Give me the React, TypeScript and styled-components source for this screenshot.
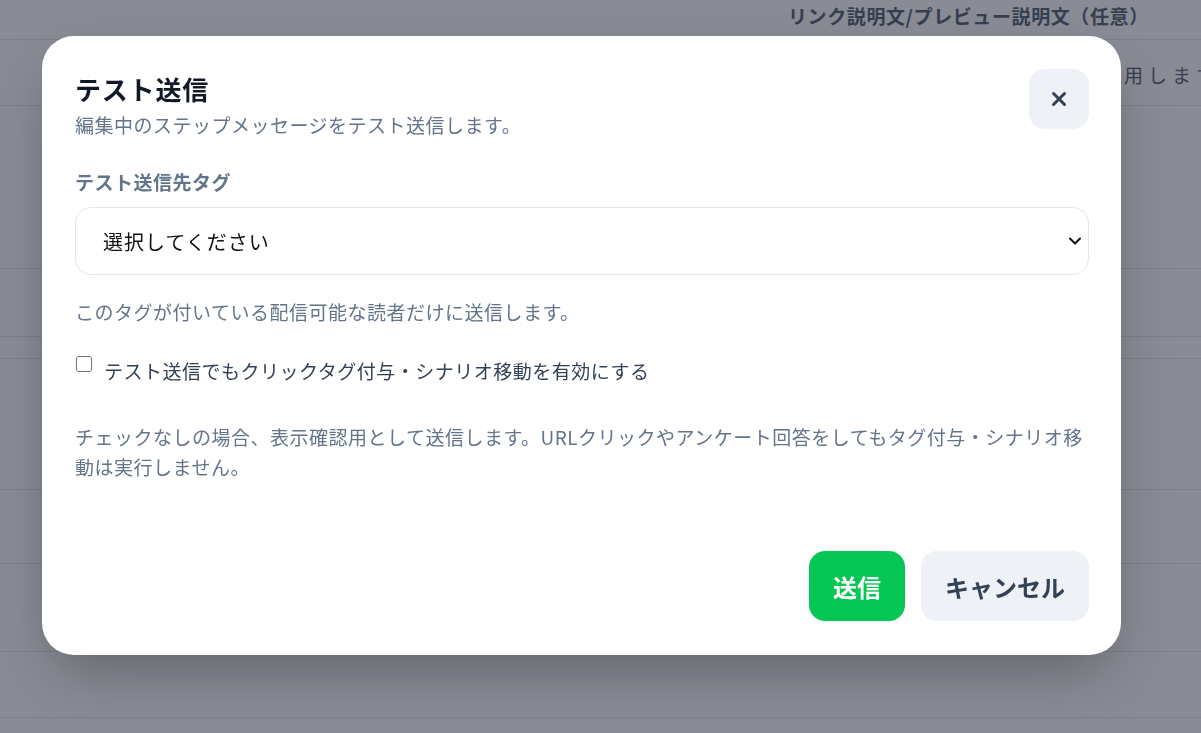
import styled, { createGlobalStyle } from 'styled-components'

const GlobalStyle = createGlobalStyle`
  html, body {
    margin: 0;
    padding: 0;
    background: #ffffff;
    font-family: 'Noto Sans CJK JP', 'Noto Sans', sans-serif;
  }
  * {
    box-sizing: border-box;
  }
`

const Page = styled.div`
  width: 1201px;
  height: 733px;
  overflow: hidden;
  background: #ffffff;
`

const Row = styled.div<{ $h: number }>`
  height: ${(p) => p.$h}px;
  border-bottom: 1px solid #e2e5ea;
  display: flex;
  align-items: center;
  padding-left: 788px;
  white-space: nowrap;
  overflow: hidden;
`

const HeadCell = styled.span`
  margin-bottom: 8px;
  font-size: 19px;
  letter-spacing: 0.6px;
  font-weight: 700;
  color: #5a6475;
`

const BodyCell = styled.span`
  margin-top: 4px;
  font-size: 19px;
  letter-spacing: 5px;
  color: #5a6475;
`

const Overlay = styled.div`
  position: fixed;
  inset: 0;
  background: rgba(20, 26, 44, 0.5);
  display: flex;
  align-items: flex-start;
  justify-content: flex-start;
  padding: 36px 0 0 42px;
`

const Modal = styled.div`
  width: 1079px;
  background: #ffffff;
  border-radius: 32px;
  padding: 33px 32px 34px 33px;
  box-shadow: 0 25px 60px -12px rgba(0, 0, 0, 0.3);
  display: flex;
  flex-direction: column;
`

const Header = styled.div`
  display: flex;
  justify-content: space-between;
  align-items: flex-start;
`

const Title = styled.h2`
  margin: 0;
  font-size: 26px;
  line-height: 40px;
  letter-spacing: 0.8px;
  font-weight: 700;
  color: #111827;
`

const Subtitle = styled.p`
  margin: 0;
  font-size: 19px;
  line-height: 32px;
  letter-spacing: 0.5px;
  color: #64748b;
`

const CloseButton = styled.button`
  width: 60px;
  height: 60px;
  border: none;
  border-radius: 16px;
  background: #eef1f5;
  color: #334155;
  display: flex;
  align-items: center;
  justify-content: center;
  padding: 0;
  cursor: pointer;
`

const Label = styled.label`
  margin-top: 27px;
  font-size: 19px;
  line-height: 28px;
  letter-spacing: 0.5px;
  font-weight: 700;
  color: #64748b;
`

const SelectWrap = styled.div`
  position: relative;
  margin-top: 11px;
`

const Select = styled.select`
  appearance: none;
  width: 100%;
  height: 68px;
  border: 1px solid #e3e6ea;
  border-radius: 16px;
  background: #ffffff;
  padding: 0 48px 0 27px;
  font-family: inherit;
  font-size: 20px;
  letter-spacing: 1px;
  color: #111111;
  outline: none;
`

const Chevron = styled.svg`
  position: absolute;
  right: 7px;
  top: 50%;
  transform: translateY(-50%);
  pointer-events: none;
`

const Help = styled.p<{ $top: number }>`
  margin: ${(p) => p.$top}px 0 0;
  font-size: 19px;
  line-height: ${(p) => (p.$top > 30 ? 30 : 28)}px;
  letter-spacing: 0.5px;
  color: #64748b;
`

const CheckRow = styled.label`
  margin-top: 30px;
  display: flex;
  align-items: flex-start;
  gap: 12px;
  font-size: 19px;
  line-height: 30px;
  letter-spacing: 0.5px;
  color: #334155;
`

const Checkbox = styled.input`
  width: 16px;
  height: 16px;
  margin: 0 0 0 1px;
  flex-shrink: 0;
`

const Footer = styled.div`
  margin-top: 69px;
  display: flex;
  justify-content: flex-end;
  gap: 16px;
`

const Button = styled.button<{ $primary?: boolean }>`
  height: 70px;
  padding: 0 24px;
  border: none;
  border-radius: 16px;
  font-family: inherit;
  font-size: 24px;
  font-weight: 700;
  background: ${(p) => (p.$primary ? '#06c755' : '#eef1f5')};
  color: ${(p) => (p.$primary ? '#ffffff' : '#334155')};
  cursor: pointer;
`

const rows = [40, 66, 163, 68, 22, 131, 74, 88, 66, 60]

export default function App() {
  return (
    <Page>
      <GlobalStyle />
      {rows.map((h, i) => (
        <Row key={i} $h={h}>
          {i === 0 && <HeadCell>リンク説明文/プレビュー説明文（任意）</HeadCell>}
          {i === 1 && <BodyCell>未入力の場合は本文の冒頭を使用します</BodyCell>}
        </Row>
      ))}

      <Overlay>
        <Modal>
          <Header>
            <div>
              <Title>テスト送信</Title>
              <Subtitle>編集中のステップメッセージをテスト送信します。</Subtitle>
            </div>
            <CloseButton aria-label="閉じる">
              <svg width="16" height="16" viewBox="0 0 16 16">
                <path
                  d="M2.5 2.5 L13.5 13.5 M13.5 2.5 L2.5 13.5"
                  stroke="currentColor"
                  strokeWidth="3"
                  strokeLinecap="round"
                />
              </svg>
            </CloseButton>
          </Header>

          <Label>テスト送信先タグ</Label>
          <SelectWrap>
            <Select defaultValue="">
              <option value="">選択してください</option>
            </Select>
            <Chevron width="14" height="14" viewBox="0 0 14 14">
              <path
                d="M2 4.5 L7 9.5 L12 4.5"
                fill="none"
                stroke="#111"
                strokeWidth="2"
                strokeLinecap="round"
                strokeLinejoin="round"
              />
            </Chevron>
          </SelectWrap>

          <Help $top={23}>このタグが付いている配信可能な読者だけに送信します。</Help>

          <CheckRow>
            <Checkbox type="checkbox" />
            テスト送信でもクリックタグ付与・シナリオ移動を有効にする
          </CheckRow>

          <Help $top={36}>
            チェックなしの場合、表示確認用として送信します。URLクリックやアンケート回答をしてもタグ付与・シナリオ移動は実行しません。
          </Help>

          <Footer>
            <Button $primary>送信</Button>
            <Button>キャンセル</Button>
          </Footer>
        </Modal>
      </Overlay>
    </Page>
  )
}
